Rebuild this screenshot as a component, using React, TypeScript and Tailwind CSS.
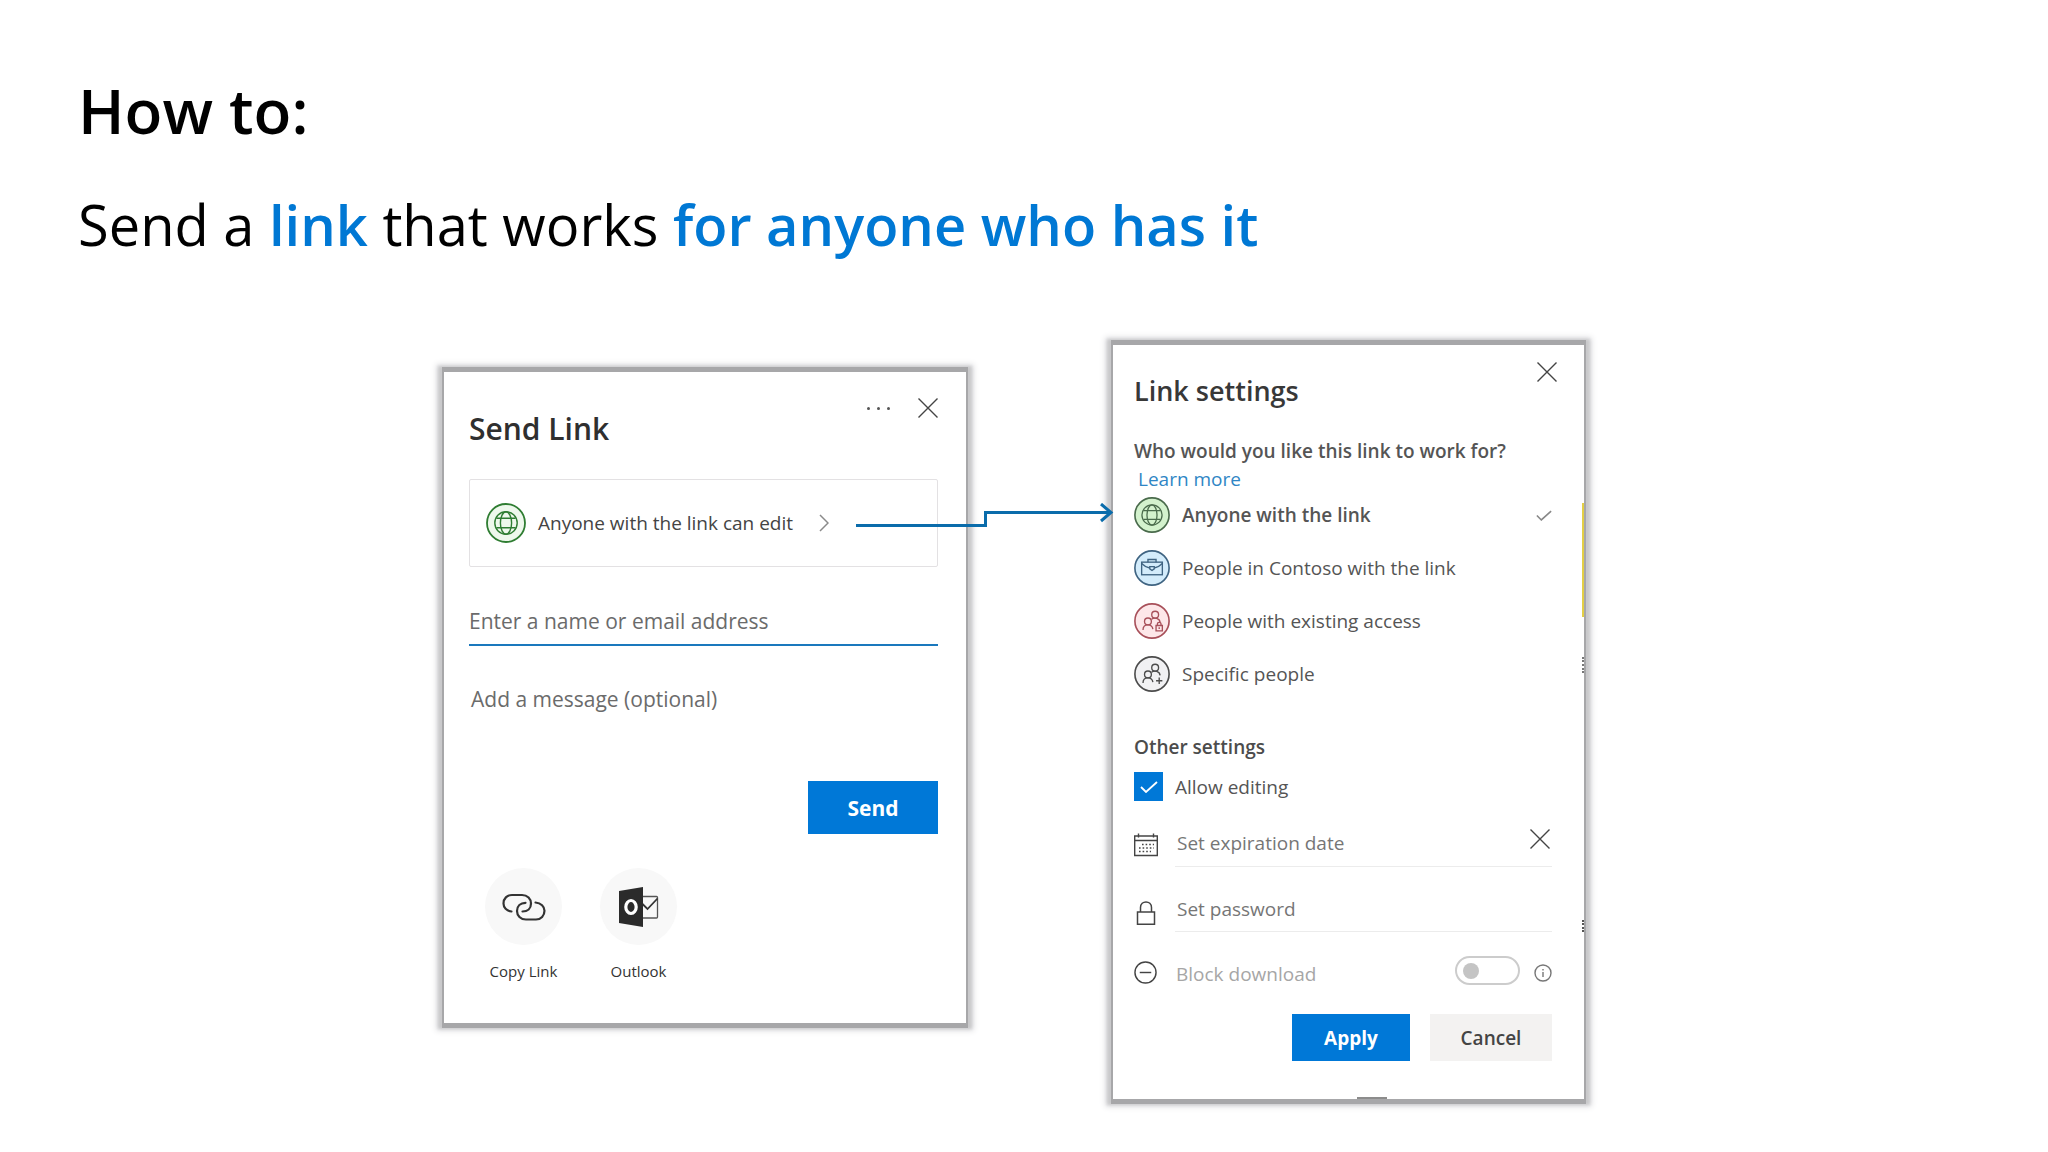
import React, { useState } from 'react';

type IconProps = { className?: string };

const CloseIcon: React.FC<IconProps> = ({ className }) => (
  <svg viewBox="0 0 20 20" className={className} fill="none" stroke="currentColor" strokeWidth="1.4">
    <path d="M0.5 0.5L19.5 19.5M19.5 0.5L0.5 19.5" />
  </svg>
);

const GlobeBadge: React.FC<IconProps & { fill: string; stroke: string }> = ({ className, fill, stroke }) => (
  <svg viewBox="0 0 40 40" className={className} fill="none" stroke={stroke} strokeWidth="1.4">
    <circle cx="20" cy="20" r="19" fill={fill} strokeWidth="1.8" />
    <circle cx="20" cy="20" r="11.2" />
    <ellipse cx="20" cy="20" rx="5.6" ry="11.2" />
    <path d="M10.4 15.2h19.2M10.4 24.8h19.2" />
  </svg>
);

const BriefcaseBadge: React.FC<IconProps> = ({ className }) => (
  <svg viewBox="0 0 40 40" className={className} fill="none" stroke="#3f6482" strokeWidth="1.5">
    <circle cx="20" cy="20" r="19" fill="#d3ecfb" strokeWidth="1.8" />
    <rect x="8.5" y="13.5" width="23" height="14" />
    <path d="M15.5 13.5v-3h9v3M8.5 15c3 3 5 4.5 9 5M31.5 15c-3 3-5 4.5-9 5" />
    <path d="M17.5 18.5h5v2.5l-2.5 1.8l-2.5-1.8z" />
  </svg>
);

const PeopleBadge: React.FC<IconProps & { fill: string; stroke: string; mark: 'lock' | 'plus' }> = ({
  className,
  fill,
  stroke,
  mark
}) => (
  <svg viewBox="0 0 40 40" className={className} fill="none" stroke={stroke} strokeWidth="1.5">
    <circle cx="20" cy="20" r="19" fill={fill} strokeWidth="1.8" />
    <circle cx="23.5" cy="13" r="3.8" />
    <circle cx="15.5" cy="20.5" r="3.8" />
    <path d="M10 30c0-4 2-5.7 5.5-5.7s5 1.7 5.5 4.7M19.5 18c3-2 9-1.5 9.5 3.5" />
    {mark === 'lock' ? (
      <path d="M24.5 25h7v6h-7zM26 25v-2c0-2 4-2 4 0v2M28 27v2" />
    ) : (
      <path d="M28 24v7M24.5 27.5h7" />
    )}
  </svg>
);

const CopyLinkIcon: React.FC<IconProps> = ({ className }) => (
  <svg viewBox="0 0 44 28" className={className} fill="none" stroke="#333333" strokeWidth="2.2" strokeLinecap="round">
    <path d="M9.5 18.5C4.5 18 1.5 14.5 1.5 10.5C1.5 5.5 5 2 10 2H20C25.5 2 29 6 29 10.5C29 15.5 25.5 18.5 20.5 18.5" />
    <path d="M33.5 9.5C39 10 42.5 13.5 42.5 17.8C42.5 22.5 39 26.5 34 26.5H24C18.5 26.5 15 22.5 15 18C15 13 18.5 9.8 23.5 9.8" />
  </svg>
);

const OutlookIcon: React.FC<IconProps> = ({ className }) => (
  <svg viewBox="0 0 40 40" className={className} fill="none">
    <path d="M22 9.5h15.5q1 0 1 1v19.5q0 1-1 1H22" stroke="#555555" strokeWidth="1.3" />
    <path d="M23 16.5l5.5 5.5L38.5 11.5" stroke="#333333" strokeWidth="1.8" />
    <path d="M0 4L24 0V40L0 36Z" fill="#2b2b2b" />
    <ellipse cx="12" cy="20" rx="5.2" ry="6.5" stroke="#ffffff" strokeWidth="3.2" />
  </svg>
);

const CalendarIcon: React.FC<IconProps> = ({ className }) => (
  <svg viewBox="0 0 24 24" className={className} fill="none" stroke="#444444" strokeWidth="1.4">
    <path d="M0.7 3h22.6v19.5H0.7zM0.7 7.5h22.6M4.5 0.5v4M19.5 0.5v4" />
    <path d="M8 11.5h12M5 15h15M5 18.5h12" strokeWidth="1.6" strokeDasharray="1.6 2" />
  </svg>
);

const LockIcon: React.FC<IconProps> = ({ className }) => (
  <svg viewBox="0 0 24 24" className={className} fill="none" stroke="#444444" strokeWidth="1.5">
    <path d="M3.5 11h17v12.2h-17zM6.5 11V6.5C6.5 -1 17.5 -1 17.5 6.5V11" />
  </svg>
);

const BlockIcon: React.FC<IconProps> = ({ className }) => (
  <svg viewBox="0 0 24 24" className={className} fill="none" stroke="#444444" strokeWidth="1.5">
    <circle cx="12" cy="12" r="11" />
    <path d="M6 12h12" />
  </svg>
);

const CheckIcon: React.FC<IconProps> = ({ className }) => (
  <svg viewBox="0 0 18 12" className={className} fill="none" stroke="currentColor" strokeWidth="1.8">
    <path d="M1 6l5 5L17 1" />
  </svg>
);

const audiences = [
  {
    id: 'anyone',
    label: 'Anyone with the link',
    icon: <GlobeBadge className="size-9 shrink-0" fill="#d3f2cd" stroke="#4a6b4c" />
  },
  {
    id: 'organization',
    label: 'People in Contoso with the link',
    icon: <BriefcaseBadge className="size-9 shrink-0" />
  },
  {
    id: 'existing',
    label: 'People with existing access',
    icon: <PeopleBadge className="size-9 shrink-0" fill="#fde7e9" stroke="#a8505a" mark="lock" />
  },
  {
    id: 'specific',
    label: 'Specific people',
    icon: <PeopleBadge className="size-9 shrink-0" fill="#f1f1f3" stroke="#4c4c4c" mark="plus" />
  }
];

const cardClass =
  'relative bg-white shadow-[0_-3px_0_2px_#a7a7a9,0_3px_0_2px_#a7a7a9,0_0_3px_6px_#c9c9cb,0_0_6px_8px_#e2e2e4]';

const Connector: React.FC = () => (
  <svg
    viewBox="0 0 260 30"
    className="pointer-events-none absolute top-6 -right-44 z-10 h-[30px] w-[260px]"
    fill="none"
    stroke="#0a6cab"
    strokeWidth="3"
  >
    <path d="M2 22.5H131.5V9.5H256" />
    <path d="M247 1L257 9.5L247 18" />
  </svg>
);

const SendLinkCard: React.FC = () => (
  <section className={`${cardClass} mt-[27px] pt-[26px] pr-7 pb-[42px] pl-[25px]`}>
    <div className="flex items-start justify-between">
      <h2 className="mt-[11px] text-[30px] leading-10 font-semibold text-[#2f2f2f]">Send Link</h2>
      <div className="flex h-5 items-center gap-7 text-[#444444]">
        <button type="button" aria-label="More options" className="flex gap-[7px]">
          <span className="size-[3px] rounded-full bg-[#555555]" />
          <span className="size-[3px] rounded-full bg-[#555555]" />
          <span className="size-[3px] rounded-full bg-[#555555]" />
        </button>
        <button type="button" aria-label="Close">
          <CloseIcon className="size-5" />
        </button>
      </div>
    </div>

    <div className="relative mt-[30px]">
      <button
        type="button"
        className="flex h-[88px] w-full items-center rounded-xs border border-[#e3e1e3] pl-4 text-left text-[19px] leading-7 text-[#444444]"
      >
        <GlobeBadge className="size-10 shrink-0" fill="#eef8ec" stroke="#2f7d32" />
        <span className="ml-3">Anyone with the link can edit</span>
        <svg viewBox="0 0 10 18" className="ml-[26px] h-[18px] w-[10px]" fill="none" stroke="#8a8a8a" strokeWidth="1.5">
          <path d="M1 1l8 8l-8 8" />
        </svg>
      </button>
      <Connector />
    </div>

    <input
      type="text"
      aria-label="Name or email address"
      placeholder="Enter a name or email address"
      className="mt-[38px] block h-[41px] w-full border-b-2 border-[#1a78bd] pb-[7px] text-[21px] leading-8 outline-none placeholder:text-[#6b6b6b]"
    />
    <textarea
      rows={1}
      aria-label="Message"
      placeholder="Add a message (optional)"
      className="mt-[37px] block h-8 w-full resize-none overflow-hidden pl-[2px] text-[21px] leading-8 outline-none placeholder:text-[#6b6b6b]"
    />

    <div className="mt-[66px] flex justify-end">
      <button type="button" className="h-[53px] w-[130px] bg-[#0078d7] text-[21px] leading-8 font-bold text-white">
        Send
      </button>
    </div>

    <div className="mt-[34px] flex gap-[38px] pl-4 text-[15px] leading-5 text-[#333333]">
      <button type="button" className="flex w-[77px] flex-col items-center gap-4">
        <span className="flex size-[77px] items-center justify-center rounded-full bg-[#f8f8f8]">
          <CopyLinkIcon className="h-7 w-11" />
        </span>
        Copy Link
      </button>
      <button type="button" className="flex w-[77px] flex-col items-center gap-4">
        <span className="flex size-[77px] items-center justify-center rounded-full bg-[#f8f8f8]">
          <OutlookIcon className="size-10" />
        </span>
        Outlook
      </button>
    </div>
  </section>
);

const LinkSettingsCard: React.FC = () => {
  const [audience, setAudience] = useState('anyone');
  const [allowEditing, setAllowEditing] = useState(true);

  return (
    <section className={`${cardClass} pt-[17px] pr-8 pb-[38px] pl-[21px] text-[19px] leading-7 text-[#555555]`}>
      {/* Edge of the window behind the dialog */}
      <span className="absolute top-[158px] right-0 h-[114px] w-[2px] bg-[#e3cf45]" />
      <span className="absolute top-[312px] right-0 h-4 border-r-2 border-dotted border-[#777777]" />
      <span className="absolute top-[575px] right-0 h-3 border-r-2 border-dotted border-[#555555]" />
      <span className="absolute bottom-0 left-[244px] h-[2px] w-[30px] bg-[#8c8c8c]" />

      <div className="-mr-[5px] flex items-start justify-between">
        <h2 className="mt-[11px] text-[27px] leading-9 font-semibold text-[#383838]">Link settings</h2>
        <button type="button" aria-label="Close" className="text-[#444444]">
          <CloseIcon className="size-5" />
        </button>
      </div>

      <p className="mt-7 font-semibold whitespace-nowrap text-[#555555]">Who would you like this link to work for?</p>
      <a href="#learn-more" className="block pl-1 text-[#2f86c5]">
        Learn more
      </a>

      <div role="radiogroup" aria-label="Who would you like this link to work for?" className="mt-1 flex flex-col gap-[17px]">
        {audiences.map(({ id, label, icon }) => (
          <label key={id} className="flex h-9 cursor-pointer items-center gap-3">
            <input
              type="radio"
              name="audience"
              value={id}
              checked={audience === id}
              onChange={() => setAudience(id)}
              className="sr-only"
            />
            {icon}
            <span className={audience === id ? 'flex-1 font-semibold' : 'flex-1'}>{label}</span>
            {audience === id && <CheckIcon className="h-[11px] w-4 text-[#888888]" />}
          </label>
        ))}
      </div>

      <h3 className="mt-[41px] font-semibold text-[#4c4c4c]">Other settings</h3>
      <label className="mt-[11px] flex h-[29px] items-center gap-3">
        <span className="grid size-[29px] place-items-center bg-[#0078d7] text-white">
          <input
            type="checkbox"
            checked={allowEditing}
            onChange={() => setAllowEditing(!allowEditing)}
            className="col-start-1 row-start-1 size-[29px] appearance-none"
          />
          {allowEditing && <CheckIcon className="pointer-events-none col-start-1 row-start-1 h-3 w-[18px]" />}
        </span>
        Allow editing
      </label>

      <div className="mt-7 flex items-start gap-[17px]">
        <CalendarIcon className="mt-1 size-6 shrink-0" />
        <div className="flex flex-1 items-start border-b border-[#ececec] pr-[2px] pb-[9px]">
          <input
            type="text"
            aria-label="Expiration date"
            placeholder="Set expiration date"
            className="h-7 min-w-0 flex-1 pl-[2px] outline-none placeholder:text-[#767676]"
          />
          <button type="button" aria-label="Clear expiration date" className="text-[#444444]">
            <CloseIcon className="size-5" />
          </button>
        </div>
      </div>

      <div className="mt-7 flex items-start gap-[17px]">
        <LockIcon className="mt-[6px] size-6 shrink-0" />
        <input
          type="password"
          aria-label="Password"
          placeholder="Set password"
          className="h-[37px] min-w-0 flex-1 border-b border-[#ececec] pb-2 pl-[2px] outline-none placeholder:text-[#767676]"
        />
      </div>

      <div className="mt-6 flex h-8 items-end">
        <BlockIcon className="mb-1 size-[23px] shrink-0" />
        <label htmlFor="block-download" className="ml-[19px] flex-1 text-[#a6a6a6]">
          Block download
        </label>
        <input
          id="block-download"
          type="checkbox"
          role="switch"
          disabled
          className="flex h-[29px] w-[65px] appearance-none items-center self-start rounded-full border-2 border-[#cccccc] pl-[6px] before:size-4 before:rounded-full before:bg-[#c4c4c4]"
        />
        <button type="button" aria-label="About blocking downloads" className="mb-[6px] ml-[14px]">
          <svg viewBox="0 0 18 18" className="size-[18px]" fill="none" stroke="#777777" strokeWidth="1.4">
            <circle cx="9" cy="9" r="8" />
            <path d="M9 8v5M9 5v1.5" />
          </svg>
        </button>
      </div>

      <div className="mt-[26px] flex justify-end gap-5">
        <button type="button" className="h-[47px] w-[118px] bg-[#0078d7] font-bold text-white">
          Apply
        </button>
        <button type="button" className="h-[47px] w-[122px] bg-[#f3f2f1] font-semibold text-[#444444]">
          Cancel
        </button>
      </div>
    </section>
  );
};

const App: React.FC = () => {
  return (
    <main className="min-h-screen bg-white px-[78px] pt-[70px] pb-12 font-['Open_Sans','Noto_Sans',sans-serif] text-black">
      <h1 className="text-[62px] leading-[80px] font-semibold">How to:</h1>
      <p className="mt-[34px] text-[56px] leading-[80px]">
        Send a <strong className="font-semibold text-[#0078d4]">link</strong> that works{' '}
        <strong className="font-semibold text-[#0078d4]">for anyone who has it</strong>
      </p>

      <div className="mt-[81px] flex justify-center pr-5">
        <div className="grid w-full max-w-[1140px] grid-cols-[522fr_471fr] items-start gap-[147px]">
          <SendLinkCard />
          <LinkSettingsCard />
        </div>
      </div>
    </main>
  );
};

export default App;
